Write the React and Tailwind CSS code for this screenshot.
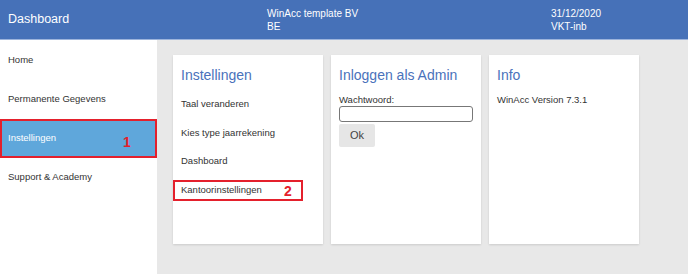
// App.jsx
const SIDE_ITEMS = ['Home', 'Permanente Gegevens', 'Instellingen', 'Support & Academy']

const SETTINGS_LINKS = ['Taal veranderen', 'Kies type jaarrekening', 'Dashboard', 'Kantoorinstellingen']

function Card({ title, children }) {
  return (
    <div className="w-[150px] h-[189px] bg-white shadow-[0_1px_2px_rgba(0,0,0,0.12)] px-2 pt-[11px]">
      <h2 className="text-[14px] leading-[18px] text-[#4a72bb] mb-[6px]">{title}</h2>
      {children}
    </div>
  )
}

export default function App() {
  return (
    <div className="w-[688px] h-[274px] flex flex-col bg-[#e8e8e8] text-[#333] font-['Liberation_Sans',Arial,sans-serif]">
      {/* Header */}
      <header className="h-[40px] shrink-0 flex items-center bg-[#4671b8] border-b border-[#9db4dc] text-white">
        <div className="w-[267px] pl-2 text-[12.5px]">Dashboard</div>
        <div className="w-[284px] text-[10px] leading-[13px]">
          <div>WinAcc template BV</div>
          <div>BE</div>
        </div>
        <div className="text-[10px] leading-[13px]">
          <div>31/12/2020</div>
          <div>VKT-inb</div>
        </div>
      </header>

      <div className="flex flex-1">
        {/* Sidebar */}
        <aside className="w-[157px] bg-white text-[9.5px]">
          {SIDE_ITEMS.map((item) => {
            const active = item === 'Instellingen'
            return (
              <div
                key={item}
                className={`h-[39.3px] flex items-center ${active ? 'relative bg-[#5fa7db] text-white border-2 border-[#e4202c] pl-[6px]' : 'pl-2'}`}
              >
                {item}
                {active && (
                  <span className="absolute left-[121px] top-[14px] text-[14px] leading-none font-bold text-[#e4202c]">1</span>
                )}
              </div>
            )
          })}
        </aside>

        {/* Main */}
        <main className="flex-1 flex gap-2 pl-4 pt-[15px]">
          <Card title="Instellingen">
            <ul className="text-[9.5px]">
              {SETTINGS_LINKS.map((link) => {
                const boxed = link === 'Kantoorinstellingen'
                return (
                  <li
                    key={link}
                    className={`flex items-center ${boxed ? 'relative -mx-2 px-[6px] h-[21px] mt-[4.5px] w-[130px] border-2 border-[#e4202c]' : 'h-[28.5px]'}`}
                  >
                    {link}
                    {boxed && (
                      <span className="absolute left-[109px] top-[2px] text-[14px] leading-none font-bold text-[#e4202c]">2</span>
                    )}
                  </li>
                )
              })}
            </ul>
          </Card>

          <Card title="Inloggen als Admin">
            <label className="block text-[9.5px] leading-[12px] mt-[10px]">Wachtwoord:</label>
            <input className="block w-[134px] h-[16px] border border-[#777] rounded-[3px] bg-white" />
            <button className="w-[36px] h-[23px] bg-[#e6e6e6] rounded-[2px] text-[11px] text-[#444]">Ok</button>
          </Card>

          <Card title="Info">
            <p className="text-[9.5px] leading-[12px] mt-[10px]">WinAcc Version 7.3.1</p>
          </Card>
        </main>
      </div>
    </div>
  )
}
